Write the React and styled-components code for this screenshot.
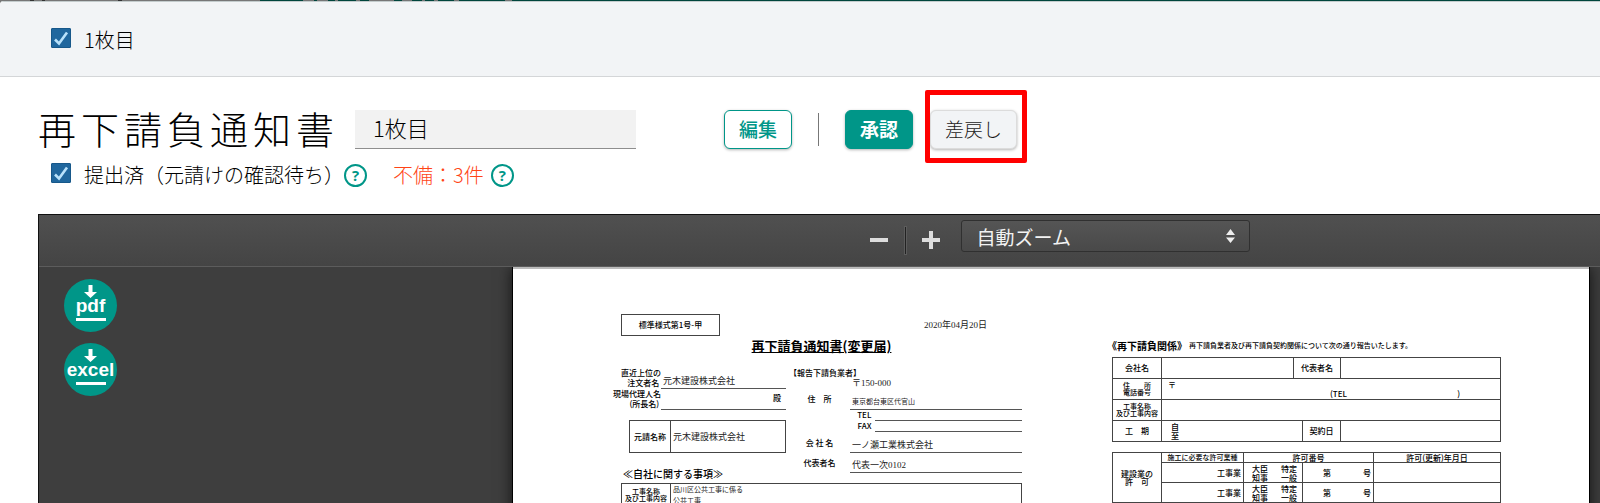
import React from "react";
import styled, { createGlobalStyle } from "styled-components";

const sans = `"Noto Sans CJK JP", "Noto Sans", sans-serif`;
const serif = `"Liberation Serif", "Noto Sans CJK JP", serif`;
const green = "#009688";

const GlobalStyle = createGlobalStyle`
  *, *::before, *::after { box-sizing: border-box; }
  body { margin: 0; font-family: ${sans}; color: #000; background: #fff; }
  button, input, select { font-family: inherit; margin: 0; }
`;

const Screen = styled.div`
  display: flex;
  flex-direction: column;
  height: 100vh;
  overflow: hidden;
  background: linear-gradient(90deg,
    #777 30px, #333 30px 34px, #777 34px 42px, #333 42px 45px, #777 45px 118px,
    #333 118px 122px, #777 122px 260px, #00453c 260px 303px, #777 303px 314px,
    #00453c 314px 317px, #777 317px 328px, #00453c 328px 335px, #777 335px 338px,
    #00453c 338px 356px, #777 356px 360px, #00453c 360px 369px, #777 369px 394px,
    #00453c 394px 402px, #777 402px 412px, #00453c 412px 422px, #777 422px 425px,
    #00453c 425px 434px, #777 434px 438px, #00453c 438px 454px, #777 454px 459px,
    #00453c 459px 505px, #777 505px 512px, #00453c 512px);
`;

const Modal = styled.main`
  flex: 1;
  min-height: 0;
  margin-top: 1px;
  display: flex;
  flex-direction: column;
  background: #fff;
  border-radius: 4px 0 0 0;
  overflow: hidden;
`;

const SheetBar = styled.header`
  flex: none;
  height: 76px;
  padding: 1px 0 0 51px;
  display: flex;
  align-items: center;
  background: #f2f4f6;
  border-top: 1px solid #c4cccd;
  border-bottom: 1px solid #d4d6d8;
`;

const CheckLabel = styled.label`
  display: inline-flex;
  align-items: center;
  gap: 13px;
  font-size: 20px;
  line-height: 24px;
  font-weight: 300;
  white-space: nowrap;
`;

const CheckMark = styled.span`
  display: grid;
  width: 20px;
  height: 20px;
  margin-bottom: 4px;
  > * { grid-area: 1 / 1; }
  svg { pointer-events: none; }
`;

const CheckInput = styled.input`
  appearance: none;
  width: 20px;
  height: 20px;
  border: 1px solid #17588a;
  border-radius: 1px;
  background: #20679e;
`;

const Detail = styled.section`
  flex: none;
  padding: 33px 20px 27px 38px;
`;

const TitleRow = styled.div`
  display: flex;
  align-items: center;
  height: 39px;
`;

const Title = styled.h1`
  flex: none;
  width: 317px;
  margin: 0;
  padding-bottom: 4px;
  font-size: 38px;
  line-height: 35px;
  font-weight: 300;
  letter-spacing: 5px;
  white-space: nowrap;
`;

const NameInput = styled.input`
  width: 281px;
  height: 39px;
  margin-right: 88px;
  padding: 0 18px 5px;
  border: 0;
  border-bottom: 1px solid #8e8e8e;
  border-radius: 0;
  background: #f2f2f2;
  color: #000;
  font-size: 22px;
  font-weight: 300;
`;

const looks = {
  outline: `background:#fff;border-color:${green};color:${green};font-weight:500;`,
  solid: `background:${green};border-color:${green};color:#fff;font-weight:700;`,
  plain: `background:#f2f4f6;border-color:#dcdcdc;color:#1a1a1a;font-weight:300;`,
};

const ActionButton = styled.button`
  height: 39px;
  padding: 0 14px 2px;
  border: 1px solid;
  border-radius: 6px;
  font-size: 19px;
  line-height: 24px;
  white-space: nowrap;
  box-shadow: 0 1px 3px rgba(0, 0, 0, 0.3);
  ${(p) => looks[p.$look]}
`;

const Divider = styled.span`
  width: 1px;
  height: 33px;
  margin: 0 26px;
  background: #777;
`;

const Highlight = styled.span`
  position: relative;
  margin-left: 17px;
  &::after {
    content: "";
    position: absolute;
    inset: -20px -10px -14px -5px;
    border: 5px solid #f00;
    border-radius: 2px;
    pointer-events: none;
  }
`;

const StatusRow = styled.div`
  display: flex;
  align-items: center;
  height: 24px;
  margin-top: 14px;
  padding-left: 13px;
`;

const HelpButton = styled.button`
  width: 23px;
  height: 23px;
  padding: 0;
  border: 2px solid ${green};
  border-radius: 50%;
  background: #fff;
  color: ${green};
  font: 700 15px/18px "Open Sans", sans-serif;
`;

const Defects = styled.span`
  margin: 0 7px 0 26px;
  color: #ff4416;
  font-size: 20px;
  line-height: 24px;
  font-weight: 300;
`;

const Viewer = styled.section`
  flex: 1;
  min-height: 0;
  margin-left: 38px;
  display: flex;
  flex-direction: column;
  border-top: 1px solid #111;
  border-left: 1px solid #111;
  background: #3e3e3e;
`;

const Toolbar = styled.div`
  flex: none;
  display: flex;
  align-items: center;
  justify-content: center;
  height: 52px;
  padding-left: 480px;
  background: linear-gradient(#505050, #444);
  border-bottom: 1px solid #5c5c5c;
`;

const ZoomButton = styled.button`
  width: 18px;
  height: 30px;
  padding: 0;
  border: 0;
  background: none;
  svg { display: block; }
`;

const ToolDivider = styled.span`
  width: 3px;
  height: 29px;
  margin: 0 15px 0 16px;
  background: #222;
  border: 1px solid #5c5c5c;
`;

const SelectBox = styled.span`
  display: grid;
  align-items: center;
  width: 289px;
  height: 32px;
  margin: 0 0 10px 21px;
  > * { grid-area: 1 / 1; }
  svg { justify-self: end; margin-right: 15px; pointer-events: none; }
`;

const ZoomSelect = styled.select`
  appearance: none;
  width: 100%;
  height: 32px;
  padding: 2px 15px 0;
  border: 1px solid #303030;
  border-radius: 3px;
  background: linear-gradient(#555, #494949);
  color: #f2f2f2;
  font-size: 19px;
`;

const Stage = styled.div`
  flex: 1;
  min-height: 0;
  display: flex;
  justify-content: space-between;
  align-items: flex-start;
  padding-right: 10px;
  overflow: hidden;
`;

const Downloads = styled.div`
  display: flex;
  flex-direction: column;
  gap: 11px;
  padding: 12px 0 0 25px;
`;

const DownloadButton = styled.button`
  display: flex;
  flex-direction: column;
  align-items: center;
  width: 53px;
  height: 53px;
  padding: 6px 0 0;
  border: 0;
  border-radius: 50%;
  background: ${green};
  color: #fff;
  font: 700 19px/15px "Liberation Sans", sans-serif;
  svg { display: block; }
  &::after {
    content: "";
    width: 30px;
    height: 3px;
    margin-top: 5px;
    background: #fff;
  }
`;

const Paper = styled.article`
  flex: none;
  display: grid;
  grid-template-columns: 401px 389px;
  column-gap: 90px;
  align-items: start;
  width: 1078px;
  height: 760px;
  padding: 47px 0 0 108px;
  border: solid #000;
  border-width: 0 1px;
  background: #fff;
  color: #000;
  font-size: 8px;
  line-height: 10px;
  font-weight: 500;
  white-space: nowrap;
  box-shadow: 0 0 14px rgba(0, 0, 0, 0.7), inset 0 2px 0 #bbb;
`;

const FormHead = styled.div`
  display: flex;
  justify-content: space-between;
  align-items: center;
  padding-right: 35px;
`;

const FormCode = styled.span`
  width: 99px;
  border: 1px solid #444;
  line-height: 20px;
  text-align: center;
`;

const Written = styled.span`
  font-family: ${serif};
  font-size: ${(p) => (p.$small ? 7 : 9)}px;
  font-weight: 400;
  color: #222;
`;

const FormTitle = styled.h2`
  margin: 2px 0 14px;
  font-size: 13px;
  line-height: 16px;
  font-weight: 700;
  text-align: center;
  text-decoration: underline;
`;

const Parties = styled.div`
  display: flex;
  justify-content: space-between;
`;

const Client = styled.div`
  width: 171px;
  margin-left: -6px;
`;

const Contractor = styled.div`
  width: 233px;
`;

const Line = styled.div`
  display: grid;
  grid-template-columns: ${(p) => p.$label}px 1fr;
  height: ${(p) => p.$height || 21}px;
`;

const LineLabel = styled.span`
  align-self: ${(p) => (p.$center ? "center" : "start")};
  justify-self: ${(p) => (p.$center ? "center" : "end")};
  text-align: ${(p) => (p.$center ? "center" : "right")};
  white-space: pre;
`;

const LineValue = styled.span`
  display: flex;
  align-items: ${(p) => (p.$end ? "center" : "flex-end")};
  justify-content: ${(p) => (p.$end ? "flex-end" : "flex-start")};
  padding: 0 5px 2px 2px;
  border-bottom: ${(p) => (p.$bare ? 0 : 1)}px solid #555;
`;

const FormTable = styled.table`
  width: 100%;
  table-layout: fixed;
  border-collapse: collapse;
  margin: ${(p) => p.$margin || "0"};
`;

const Row = styled.tr`
  height: ${(p) => p.$height}px;
`;

const cell = `
  padding: 0;
  border: 1px solid #444;
  font-weight: 500;
  white-space: pre;
  overflow: hidden;
`;

const Th = styled.th`
  ${cell}
  font-size: ${(p) => (p.$small ? 7 : 8)}px;
  line-height: ${(p) => (p.$small ? 7 : 8)}px;
`;

const Td = styled.td`
  ${cell}
  padding: 0 2px;
  text-align: ${(p) => p.$align || "left"};
  vertical-align: ${(p) => p.$valign || "middle"};
  line-height: 9px;
`;

const Spread = styled.div`
  display: flex;
  justify-content: space-between;
  padding: 0 ${(p) => p.$right || 0}px 0 ${(p) => p.$left || 0}px;
`;

const SectionTitle = styled.h3`
  margin: -7px 0 1px 2px;
  font-size: 10px;
  line-height: 16px;
  font-weight: 500;
`;

const RelationTitle = styled.h3`
  display: flex;
  align-items: center;
  margin: 24px 0 4px -5px;
  font-size: 10px;
  line-height: 15px;
  font-weight: 700;
  small { margin-left: 2px; font-size: 7px; font-weight: 500; }
`;

function Check({ label }) {
  return (
    <CheckLabel>
      <CheckMark>
        <CheckInput type="checkbox" defaultChecked />
        <svg width="20" height="20" viewBox="0 0 20 20" fill="none" aria-hidden="true">
          <path d="M4 11.5 8 15.5 16 4.5" stroke="#b9e2fb" strokeWidth="2.6" />
        </svg>
      </CheckMark>
      {label}
    </CheckLabel>
  );
}

function Download({ kind }) {
  return (
    <DownloadButton type="button">
      <svg width="13" height="13" viewBox="0 0 13 13" fill="#fff" aria-hidden="true">
        <path d="M4.5 0h4v7H13L6.500 13 0 7h4.500z" />
      </svg>
      {kind}
    </DownloadButton>
  );
}

function PartyLine({ label, children, height, small }) {
  return (
    <Line $label={61} $height={height}>
      <LineLabel $center>{label}</LineLabel>
      <LineValue><Written $small={small}>{children}</Written></LineValue>
    </Line>
  );
}

function PhoneLine({ label }) {
  return (
    <Line $label={86} $height={11}>
      <LineLabel>{label + "  "}</LineLabel>
      <LineValue />
    </Line>
  );
}

function PermitCells() {
  return (
    <>
      <Td $align="right">工事業</Td>
      <Td>
        <Spread $left={6} $right={3}><span>大臣</span><span>特定</span></Spread>
        <Spread $left={6} $right={3}><span>知事</span><span>一般</span></Spread>
      </Td>
      <Td><Spread $left={18}><span>第</span><span>号</span></Spread></Td>
      <Td />
    </>
  );
}

function Document() {
  return (
    <Paper>
      <div>
        <FormHead>
          <FormCode>標準様式第1号-甲</FormCode>
          <Written>2020年04月20日</Written>
        </FormHead>
        <FormTitle>再下請負通知書(変更届)</FormTitle>
        <Parties>
          <Client>
            <Line $label={46}>
              <LineLabel>{"直近上位の\n注文者名 "}</LineLabel>
              <LineValue><Written>元木建設株式会社</Written></LineValue>
            </Line>
            <Line $label={46}>
              <LineLabel>{"現場代理人名\n(所長名) "}</LineLabel>
              <LineValue $end>殿</LineValue>
            </Line>
            <Spread $left={14}>
              <FormTable $margin="10px 0 0">
                <colgroup><col width="41" /><col /></colgroup>
                <tbody>
                  <Row $height={32}>
                    <Th scope="row">元請名称</Th>
                    <Td><Written>元木建設株式会社</Written></Td>
                  </Row>
                </tbody>
              </FormTable>
            </Spread>
          </Client>
          <Contractor>
            <div>【報告下請負業者】</div>
            <Line $label={61} $height={10}>
              <span />
              <LineValue $bare><Written>〒150-000</Written></LineValue>
            </Line>
            <PartyLine label="住　所" height={22} small>東京都台東区代官山</PartyLine>
            <PhoneLine label="TEL" />
            <PhoneLine label="FAX" />
            <PartyLine label="会 社 名">一ノ瀬工業株式会社</PartyLine>
            <PartyLine label="代表者名" height={20}>代表一次0102</PartyLine>
          </Contractor>
        </Parties>
        <SectionTitle>≪自社に関する事項≫</SectionTitle>
        <FormTable>
          <colgroup><col width="49" /><col /></colgroup>
          <tbody>
            <Row $height={20}>
              <Th scope="row" $small>{"工事名称\n及び工事内容"}</Th>
              <Td $valign="top"><Written $small>{"品川区公共工事に係る\n公共工事"}</Written></Td>
            </Row>
          </tbody>
        </FormTable>
      </div>
      <div>
        <RelationTitle>
          《再下請負関係》
          <small>再下請負業者及び再下請負契約関係について次の通り報告いたします。</small>
        </RelationTitle>
        <FormTable>
          <colgroup>
            <col width="49" /><col width="132" /><col width="9" /><col width="38" /><col />
          </colgroup>
          <tbody>
            <Row $height={21}>
              <Th scope="row">会社名</Th><Td /><Th colSpan={2}>代表者名</Th><Td />
            </Row>
            <Row $height={21}>
              <Th scope="row" $small>{"住　　所\n電話番号"}</Th>
              <Td colSpan={4}>
                <Spread $left={4}><span>〒</span></Spread>
                <Spread $left={166} $right={38}><span>(TEL</span><span>)</span></Spread>
              </Td>
            </Row>
            <Row $height={21}>
              <Th scope="row" $small>{"工事名称\n及び工事内容"}</Th><Td colSpan={4} />
            </Row>
            <Row $height={21}>
              <Th scope="row">工　期</Th>
              <Td colSpan={2}>
                <Spread $left={7}>自</Spread>
                <Spread $left={7}>至</Spread>
              </Td>
              <Th>契約日</Th><Td />
            </Row>
          </tbody>
        </FormTable>
        <FormTable $margin="10px 0 0">
          <colgroup>
            <col width="49" /><col width="82" /><col width="59" /><col width="71" /><col />
          </colgroup>
          <tbody>
            <Row $height={10}>
              <Th scope="row" rowSpan={3}>{"建設業の\n許　可"}</Th>
              <Th $small>施工に必要な許可業種</Th><Th colSpan={2}>許可番号</Th><Th>許可(更新)年月日</Th>
            </Row>
            <Row $height={20}><PermitCells /></Row>
            <Row $height={20}><PermitCells /></Row>
          </tbody>
        </FormTable>
      </div>
    </Paper>
  );
}

export default function App() {
  return (
    <Screen>
      <GlobalStyle />
      <Modal>
        <SheetBar><Check label="1枚目" /></SheetBar>
        <Detail>
          <TitleRow>
            <Title>再下請負通知書</Title>
            <NameInput type="text" aria-label="書類名" defaultValue="1枚目" />
            <ActionButton type="button" $look="outline">編集</ActionButton>
            <Divider />
            <ActionButton type="button" $look="solid">承認</ActionButton>
            <Highlight><ActionButton type="button" $look="plain">差戻し</ActionButton></Highlight>
          </TitleRow>
          <StatusRow>
            <Check label="提出済（元請けの確認待ち）" />
            <HelpButton type="button">?</HelpButton>
            <Defects>不備：3件</Defects>
            <HelpButton type="button">?</HelpButton>
          </StatusRow>
        </Detail>
        <Viewer>
          <Toolbar>
            <ZoomButton type="button" aria-label="縮小">
              <svg width="18" height="30" viewBox="0 0 18 30" aria-hidden="true">
                <path d="M0 12h18v4H0z" fill="#ddd" />
              </svg>
            </ZoomButton>
            <ToolDivider />
            <ZoomButton type="button" aria-label="拡大">
              <svg width="18" height="30" viewBox="0 0 18 30" aria-hidden="true">
                <path d="M0 12h7V5h4v7h7v4h-7v7H7v-7H0z" fill="#ddd" />
              </svg>
            </ZoomButton>
            <SelectBox>
              <ZoomSelect aria-label="ズーム" defaultValue="auto">
                <option value="auto">自動ズーム</option>
              </ZoomSelect>
              <svg width="9" height="14" viewBox="0 0 9 14" fill="#eee" aria-hidden="true">
                <path d="M4.500 0 9 6H0zM0 8.500h9L4.500 14z" />
              </svg>
            </SelectBox>
          </Toolbar>
          <Stage>
            <Downloads>
              <Download kind="pdf" />
              <Download kind="excel" />
            </Downloads>
            <Document />
          </Stage>
        </Viewer>
      </Modal>
    </Screen>
  );
}
